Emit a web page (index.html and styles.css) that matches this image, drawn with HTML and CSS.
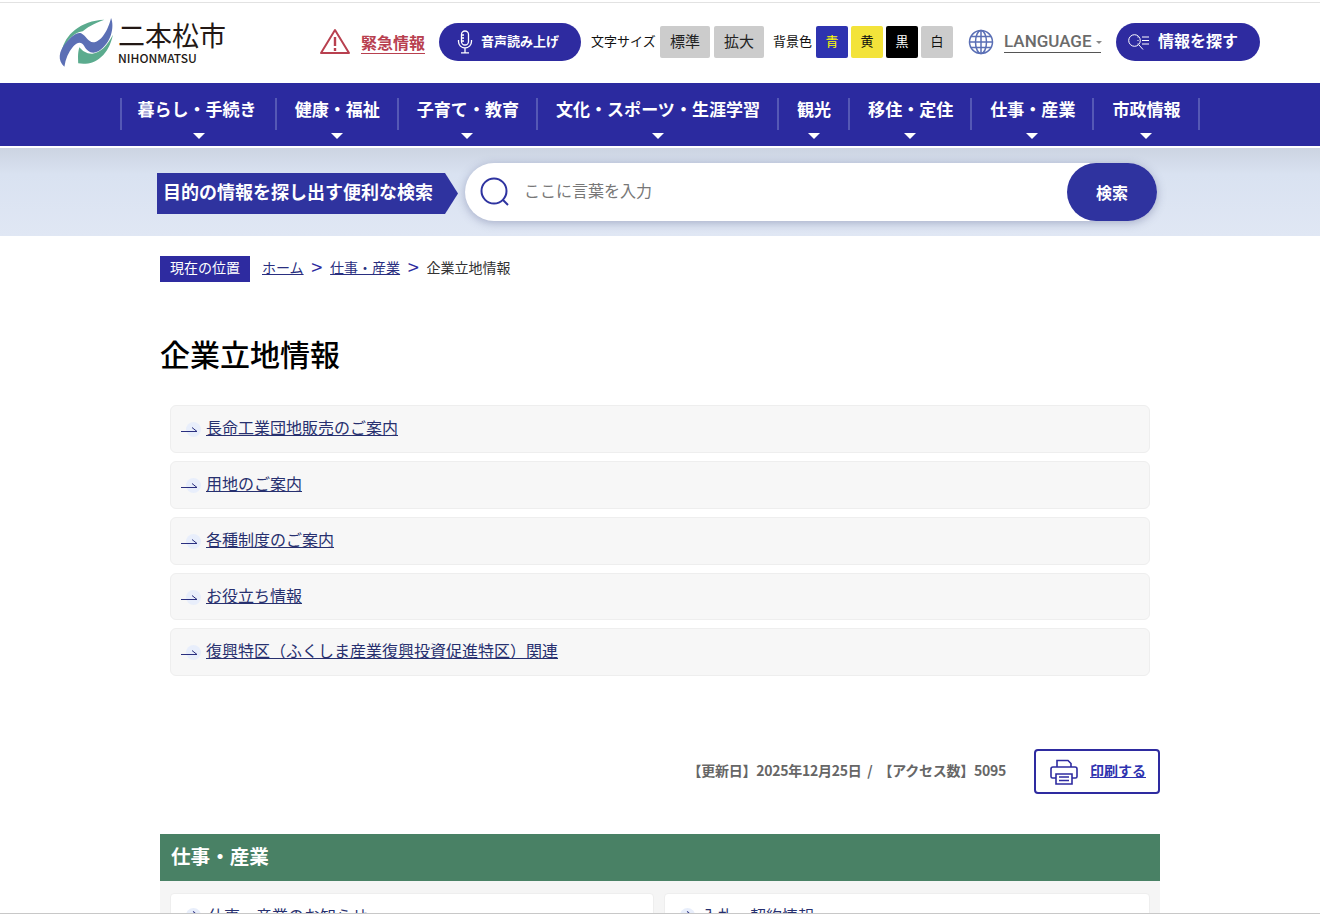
FILE: index.html
```html
<!DOCTYPE html>
<html lang="ja">
<head>
    <meta charset="UTF-8">
    <meta name="viewport" content="width=device-width, initial-scale=1.0">
    <title>企業立地情報</title>
    <link rel="stylesheet" href="styles.css">
</head>
<body>
<div class="frame">
    <header class="header">
        <a class="logo" href="#">
            <svg class="logo-mark" viewBox="0 0 192 168" width="64" height="56">
                <g transform="translate(92 0) scale(1.12 1) translate(-92 0)">
                    <path fill="#5bab8e" d="M28 112C36 62 78 20 142 17C112 30 96 40 84 52C60 56 42 78 28 112Z"/>
                    <path fill="#5b6fb5" d="M35 158C16 140 20 112 38 88C52 68 70 52 80 58C94 66 98 84 112 85C134 84 152 48 160 12C170 40 160 88 126 112C108 122 96 112 88 96C80 82 70 84 58 98C46 114 38 134 35 158Z"/>
                    <path fill="#5bab8e" d="M75 100C70 120 72 135 72 148C112 156 152 130 165 62C150 96 130 116 110 119C95 120 84 112 75 100Z"/>
                </g>
            </svg>
            <span class="logo-text">
                <span class="logo-ja">二本松市</span>
                <span class="logo-en">NIHONMATSU</span>
            </span>
        </a>
        <svg class="alert-icon" viewBox="0 0 30 26" width="30" height="26">
            <path fill="none" stroke="#b8404f" stroke-width="2" stroke-linejoin="round" d="M15 2L29 25H1Z"/>
            <path stroke="#b8404f" stroke-width="2.4" d="M15 9V18M15 20V23"/>
        </svg>
        <a class="alert-link" href="#">緊急情報</a>
        <a class="pill pill-voice" href="#">
            <svg viewBox="0 0 16 24" width="16" height="24">
                <rect x="4.500" y="1" width="7" height="14" rx="3.500" fill="none" stroke="#fff" stroke-width="1.300"/>
                <path fill="none" stroke="#fff" stroke-width="1.300" d="M1.500 10V11.500A6.500 6.500 0 0 0 14.500 11.500V10M8 18V22.500M4 22.800H12M4.500 5H7M4.500 8H7M4.500 11H7"/>
            </svg>
            <span class="pill-text">音声読み上げ</span>
        </a>
        <span class="tool-label size-label">文字サイズ</span>
        <a class="size-btn" href="#">標準</a>
        <a class="size-btn" href="#">拡大</a>
        <span class="tool-label color-label">背景色</span>
        <a class="color-btn color-blue" href="#">青</a>
        <a class="color-btn color-yellow" href="#">黄</a>
        <a class="color-btn color-black" href="#">黒</a>
        <a class="color-btn color-white" href="#">白</a>
        <svg class="globe" viewBox="0 0 26 26" width="26" height="26">
            <g fill="none" stroke="#5a6fb5" stroke-width="1.500">
                <circle cx="13" cy="13" r="11.500"/>
                <ellipse cx="13" cy="13" rx="5.500" ry="11.500"/>
                <path d="M13 1.500V24.500M1.500 13H24.500M3 7.500H23M3 18.500H23"/>
            </g>
        </svg>
        <a class="lang" href="#">LANGUAGE<span class="lang-caret"></span></a>
        <a class="pill pill-find" href="#">
            <svg viewBox="0 0 22 16" width="22" height="16">
                <circle cx="6.500" cy="6.500" r="5.800" fill="none" stroke="#fff" stroke-width="1"/>
                <path fill="none" stroke="#fff" stroke-width="1" d="M11 11L15 15.500M14 3H21M14 6.500H21M14 10H21M9.500 3H10.500M9.500 6.500H10.500M9.500 10H10.500"/>
            </svg>
            <span class="pill-text">情報を探す</span>
        </a>
    </header>

    <nav class="gnav">
        <ul class="gnav-list">
            <li><a href="#">暮らし・手続き</a></li>
            <li><a href="#">健康・福祉</a></li>
            <li><a href="#">子育て・教育</a></li>
            <li><a href="#">文化・スポーツ・生涯学習</a></li>
            <li><a href="#">観光</a></li>
            <li><a href="#">移住・定住</a></li>
            <li><a href="#">仕事・産業</a></li>
            <li><a href="#">市政情報</a></li>
        </ul>
    </nav>

    <div class="search-band">
        <div class="search-title">目的の情報を探し出す便利な検索</div>
        <form class="search-box">
            <svg class="search-icon" viewBox="0 0 30 30" width="30" height="30">
                <circle cx="14" cy="14" r="12.500" fill="none" stroke="#2e33a0" stroke-width="2"/>
                <path stroke="#2e33a0" stroke-width="2" d="M23 23L28 28"/>
            </svg>
            <input class="search-input" type="text" placeholder="ここに言葉を入力">
            <button class="search-btn" type="button">検索</button>
        </form>
    </div>

    <main class="content">
        <div class="crumbs">
            <span class="crumbs-label">現在の位置</span>
            <a href="#">ホーム</a>
            <span class="crumbs-sep">&gt;</span>
            <a href="#">仕事・産業</a>
            <span class="crumbs-sep">&gt;</span>
            <span class="crumbs-now">企業立地情報</span>
        </div>

        <h1 class="page-title">企業立地情報</h1>

        <ul class="link-list">
            <li><svg class="link-arrow" viewBox="0 0 16 5" width="16" height="5"><path fill="none" stroke="#2a2f80" d="M0 4.500H16L11 0.500"/></svg><a href="#">長命工業団地販売のご案内</a></li>
            <li><svg class="link-arrow" viewBox="0 0 16 5" width="16" height="5"><path fill="none" stroke="#2a2f80" d="M0 4.500H16L11 0.500"/></svg><a href="#">用地のご案内</a></li>
            <li><svg class="link-arrow" viewBox="0 0 16 5" width="16" height="5"><path fill="none" stroke="#2a2f80" d="M0 4.500H16L11 0.500"/></svg><a href="#">各種制度のご案内</a></li>
            <li><svg class="link-arrow" viewBox="0 0 16 5" width="16" height="5"><path fill="none" stroke="#2a2f80" d="M0 4.500H16L11 0.500"/></svg><a href="#">お役立ち情報</a></li>
            <li><svg class="link-arrow" viewBox="0 0 16 5" width="16" height="5"><path fill="none" stroke="#2a2f80" d="M0 4.500H16L11 0.500"/></svg><a href="#">復興特区（ふくしま産業復興投資促進特区）関連</a></li>
        </ul>

        <div class="meta">
            <span class="meta-text">【更新日】2025年12月25日&nbsp; /&nbsp; 【アクセス数】5095</span>
            <a class="print" href="#">
                <svg viewBox="0 0 28 26" width="28" height="26">
                    <g fill="none" stroke="#2e2ba0" stroke-width="1.600">
                        <path d="M7 8V1.500H18L21 4.500V8"/>
                        <path d="M6 19H2.500A1.500 1.500 0 0 1 1 17.500V10A2 2 0 0 1 3 8H25A2 2 0 0 1 27 10V17.500A1.500 1.500 0 0 1 25.500 19H22"/>
                        <path d="M6 15H22V25H6ZM9 18H19M9 21.500H19"/>
                    </g>
                </svg>
                <span class="print-text">印刷する</span>
            </a>
        </div>

        <section class="section">
            <h2 class="section-title">仕事・産業</h2>
            <div class="section-grid">
                <a class="section-card" href="#">仕事・産業のお知らせ</a>
                <a class="section-card" href="#">入札・契約情報</a>
            </div>
        </section>
    </main>
</div>
</body>
</html>
```

FILE: styles.css
```css
*{
    margin: 0;
    padding: 0;
    box-sizing: border-box;
    list-style: none;
}
html,body{
    height: 915px;
    overflow: hidden;
    background-color: #fff;
}
body{
    padding-top: 2px;
    font-family: "Noto Sans CJK JP", "Noto Sans", sans-serif;
    color: #222;
}
a{
    color: inherit;
}
.frame{
    height: 912px;
    overflow: hidden;
    border-top: 1px solid #e2e2e2;
    border-bottom: 1px solid #c8c8c8;
}

/* header */
.header{
    display: flex;
    align-items: center;
    height: 80px;
    padding: 0 0 2px 55px;
}
.logo{
    display: flex;
    align-items: center;
    width: 265px;
    text-decoration: none;
    color: #231815;
}
.logo-text{
    display: flex;
    flex-direction: column;
    margin-left: -1px;
}
.logo-ja{
    font-size: 27px;
    line-height: 32px;
    font-weight: 400;
}
.logo-en{
    font-size: 12px;
    line-height: 14px;
    font-weight: 500;
}
.alert-icon{
    margin-top: -2px;
}
.alert-link{
    margin-left: 11px;
    font-size: 16px;
    line-height: 22px;
    font-weight: 700;
    color: #b8404f;
    text-decoration: none;
    border-bottom: 1px solid #b8404f;
}
.pill{
    display: flex;
    align-items: center;
    height: 38px;
    border-radius: 19px;
    background-color: #2e2ba0;
    color: #fff;
    font-weight: 700;
    text-decoration: none;
}
.pill-text{
    margin-top: -4px;
}
.pill-voice{
    width: 142px;
    margin-left: 14px;
    padding-left: 18px;
    gap: 8px;
    font-size: 13px;
}
.tool-label{
    padding-bottom: 4px;
    font-size: 13px;
    color: #111;
}
.size-label{
    margin-left: 10px;
    width: 69px;
    white-space: nowrap;
}
.size-btn{
    width: 50px;
    height: 32px;
    margin-right: 4px;
    border-radius: 2px;
    background-color: #ccc;
    font-size: 15px;
    line-height: 29px;
    text-align: center;
    text-decoration: none;
}
.color-label{
    margin-left: 5px;
    width: 43px;
    white-space: nowrap;
}
.color-btn{
    width: 32px;
    height: 32px;
    margin-right: 3px;
    border-radius: 2px;
    font-size: 13px;
    line-height: 29px;
    text-align: center;
    text-decoration: none;
}
.color-blue{
    background-color: #2e33b0;
    color: #ff0;
}
.color-yellow{
    background-color: #f3e33a;
    color: #111;
}
.color-black{
    background-color: #000;
    color: #fff;
}
.color-white{
    background-color: #ccc;
    color: #111;
}
.globe{
    margin-left: 12px;
}
.lang{
    display: flex;
    align-items: center;
    margin-left: 10px;
    width: 97px;
    height: 21px;
    padding-bottom: 2px;
    font-family: Roboto, "Noto Sans", sans-serif;
    font-size: 17px;
    font-weight: 500;
    color: #6b6b6b;
    text-decoration: none;
    border-bottom: 1px solid #555;
}
.lang-caret{
    margin: 3px 0 0 4px;
    border-top: 3px solid #888;
    border-left: 3px solid transparent;
    border-right: 3px solid transparent;
}
.pill-find{
    width: 144px;
    margin-left: 15px;
    padding-left: 12px;
    gap: 8px;
    font-size: 16px;
}

/* global nav */
.gnav{
    height: 63px;
    background-color: #2b2a9f;
}
.gnav-list{
    display: flex;
    justify-content: center;
    padding-top: 15px;
}
.gnav-list li{
    position: relative;
    height: 32px;
    padding: 0 17px 0 18px;
    border-left: 2px solid #5558b5;
}
.gnav-list li:first-child{
    padding: 0 18px 0 15px;
}
.gnav-list li:last-child{
    border-right: 2px solid #5558b5;
}
.gnav-list a{
    display: block;
    color: #fff;
    font-size: 17.050px;
    font-weight: 700;
    line-height: 22px;
    text-decoration: none;
}
.gnav-list li::after{
    content: "";
    position: absolute;
    left: 50%;
    top: 35px;
    margin-left: -6px;
    border-top: 6px solid #fff;
    border-left: 6px solid transparent;
    border-right: 6px solid transparent;
}

/* search */
.search-band{
    display: flex;
    align-items: center;
    height: 90px;
    padding: 3px 0 0 157px;
    border-top: 2px solid #fff;
    background: linear-gradient(#ccd4e2, #d9e2f1 30%, #e0e7f4);
}
.search-title{
    display: flex;
    align-items: center;
    width: 301px;
    height: 41px;
    padding: 0 0 5px 6px;
    background-color: #2f339f;
    color: #fff;
    font-size: 18px;
    font-weight: 700;
    clip-path: polygon(0 0, 288px 0, 100% 50%, 288px 100%, 0 100%);
}
.search-box{
    display: flex;
    align-items: center;
    width: 692px;
    height: 58px;
    margin: -4px 0 0 7px;
    padding-left: 15px;
    border-radius: 29px;
    background-color: #fff;
    box-shadow: 0 2px 10px rgba(60,70,120,0.35);
}
.search-input{
    flex: 1;
    min-width: 0;
    margin-left: 14px;
    padding-bottom: 4px;
    border: 0;
    outline: 0;
    background: none;
    font-family: inherit;
    font-size: 16px;
}
.search-input::placeholder{
    color: #777;
    opacity: 1;
}
.search-btn{
    width: 90px;
    height: 58px;
    border: 0;
    border-radius: 29px;
    background-color: #2f339f;
    color: #fff;
    font-family: inherit;
    font-size: 16px;
    font-weight: 700;
}

/* content */
.content{
    width: 1000px;
    margin: 0 auto;
}
.crumbs{
    display: flex;
    align-items: center;
    height: 26px;
    margin-top: 20px;
    font-size: 14px;
    color: #333;
}
.crumbs a,
.crumbs-now{
    margin-top: -4px;
}
.crumbs a{
    color: #2a2f80;
}
.crumbs-label{
    width: 90px;
    height: 26px;
    margin-right: 12px;
    background-color: #2e2ba0;
    color: #fff;
    line-height: 23px;
    text-align: center;
}
.crumbs-sep{
    width: 26.500px;
    margin-top: -5px;
    font-size: 20px;
    font-weight: 400;
    color: #2e2ba0;
    text-align: center;
}
.page-title{
    margin-top: 48px;
    font-size: 30px;
    font-weight: 500;
    line-height: 46px;
    color: #000;
}
.link-list{
    margin: 29px 10px 0;
}
.link-list li{
    position: relative;
    display: flex;
    align-items: center;
    height: 48px;
    margin-bottom: 8px;
    padding: 0 0 4px 10px;
    border: 1px solid #eee;
    border-radius: 6px;
    background-color: #f7f7f7;
    font-size: 16px;
}
.link-list li:nth-child(4){
    height: 47px;
}
.link-list li a{
    position: relative;
    color: #27306f;
}
.link-list li::before{
    content: "";
    position: absolute;
    left: 15px;
    top: 16px;
    width: 15px;
    height: 15px;
    border-radius: 50%;
    background-color: #e8eefb;
}
.link-arrow{
    position: relative;
    margin: 5px 9px 0 0;
}
.meta{
    display: flex;
    align-items: center;
    justify-content: flex-end;
    margin-top: 73px;
}
.meta-text{
    margin-top: -4px;
    font-size: 14px;
    font-weight: 700;
    letter-spacing: -0.250px;
    color: #666;
}
.print{
    display: flex;
    align-items: center;
    width: 126px;
    height: 45px;
    margin-left: 28px;
    padding-left: 14px;
    gap: 12px;
    border: 2px solid #2e2ba0;
    border-radius: 4px;
    color: #2e33b0;
    font-size: 14px;
    font-weight: 700;
}
.print-text{
    margin-top: -4px;
}
.section{
    margin-top: 40px;
    background-color: #f5f5f5;
}
.section-title{
    height: 47px;
    padding-left: 11px;
    background-color: #498165;
    color: #fff;
    font-size: 19.600px;
    font-weight: 700;
    line-height: 43px;
}
.section-grid{
    display: grid;
    grid-template-columns: 484px 486px;
    gap: 10px;
    padding: 12px 10px;
}
.section-card{
    position: relative;
    height: 60px;
    padding: 9px 0 0 37px;
    border: 1px solid #eee;
    border-radius: 4px;
    background-color: #fff;
    font-size: 16px;
    color: #27306f;
    text-decoration: none;
}
.section-card::before{
    content: "";
    position: absolute;
    left: 15px;
    top: 14px;
    width: 15px;
    height: 15px;
    border-radius: 50%;
    background-color: #e8eefb;
}
.section-card::after{
    content: "";
    position: absolute;
    left: 20px;
    top: 18px;
    width: 4px;
    height: 4px;
    border-top: 1px solid #2a2f80;
    border-right: 1px solid #2a2f80;
    transform: rotate(45deg);
}
```
